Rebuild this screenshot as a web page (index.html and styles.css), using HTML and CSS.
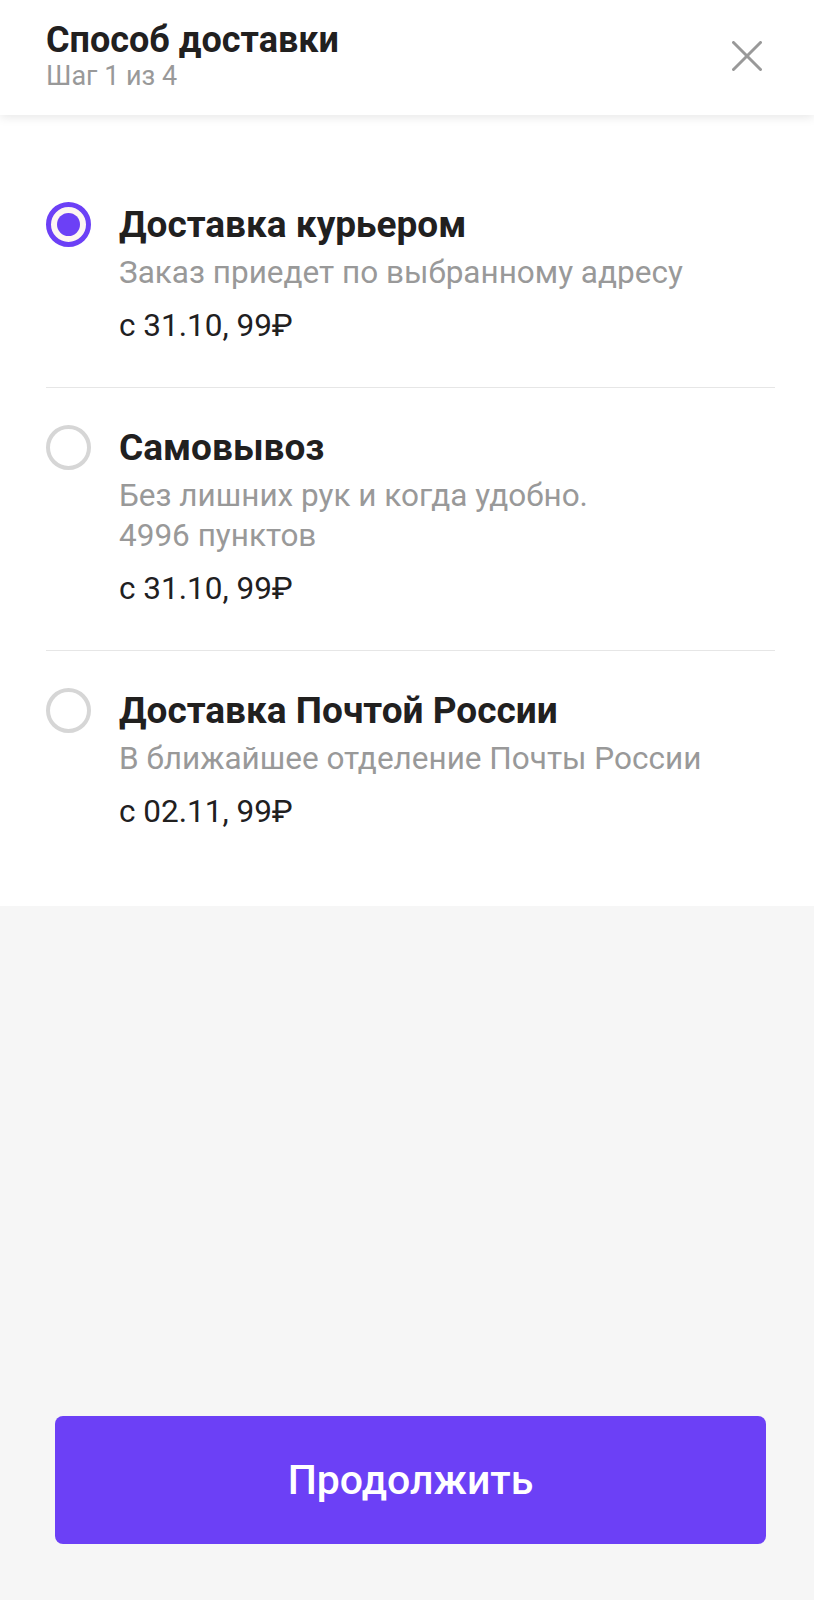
FILE: index.html
```html
<!DOCTYPE html>
<html>
<head>
  <meta charset="utf-8">
  <title>Способ доставки</title>
  <link rel="stylesheet" href="styles.css">
</head>
<body>
  <div class="page">
    <div class="header">
      <div class="header-text">
        <h1>Способ доставки</h1>
        <div class="step">Шаг 1 из 4</div>
      </div>
      <button class="close" aria-label="Закрыть">
        <svg width="30" height="30" viewBox="0 0 30 30">
          <line x1="1.5" y1="1.5" x2="28.5" y2="28.5" />
          <line x1="28.5" y1="1.5" x2="1.5" y2="28.5" />
        </svg>
      </button>
    </div>

    <div class="options">
      <div class="option">
        <span class="radio checked"></span>
        <div class="option-body">
          <div class="option-title">Доставка курьером</div>
          <div class="option-desc">Заказ приедет по выбранному адресу</div>
          <div class="option-price">с 31.10, 99₽</div>
        </div>
      </div>

      <div class="option">
        <span class="radio"></span>
        <div class="option-body">
          <div class="option-title">Самовывоз</div>
          <div class="option-desc">Без лишних рук и когда удобно.<br>4996 пунктов</div>
          <div class="option-price">с 31.10, 99₽</div>
        </div>
      </div>

      <div class="option">
        <span class="radio"></span>
        <div class="option-body">
          <div class="option-title">Доставка Почтой России</div>
          <div class="option-desc">В ближайшее отделение Почты России</div>
          <div class="option-price">с 02.11, 99₽</div>
        </div>
      </div>
    </div>

    <div class="footer">
      <button class="btn">Продолжить</button>
    </div>
  </div>
</body>
</html>
```

FILE: styles.css
```css
body {
  font-family: Roboto, "Noto Sans", Arial, sans-serif;
  background-color: #f6f6f6;
  color: #21201f;
  margin: 0;
  padding: 0;
}

.page {
  display: flex;
  flex-direction: column;
  min-height: 100vh;
}

.header {
  position: relative;
  z-index: 1;
  display: flex;
  justify-content: space-between;
  align-items: flex-start;
  height: 115px;
  box-sizing: border-box;
  padding: 20px 52px 0 46px;
  background-color: #fff;
  box-shadow: 0 2px 10px rgba(0, 0, 0, 0.1);
}

h1 {
  margin: 0;
  font-size: 36px;
  line-height: 40px;
  font-weight: 700;
}

.step {
  font-size: 27px;
  line-height: 32px;
  color: #999;
}

.close {
  margin-top: 21px;
  padding: 0;
  border: none;
  background: none;
  cursor: pointer;
}

.close svg {
  display: block;
  stroke: #999;
  stroke-width: 3;
  stroke-linecap: round;
}

.options {
  background-color: #fff;
  padding: 50px 39px 33px 46px;
}

.option {
  display: flex;
  align-items: flex-start;
  gap: 28px;
  padding: 37px 0 41px;
  border-bottom: 1px solid #e6e6e6;
}

.option:last-child {
  border-bottom: none;
}

.radio {
  flex: none;
  width: 45px;
  height: 45px;
  box-sizing: border-box;
  border: 4px solid #d6d6d6;
  border-radius: 50%;
  background-color: #fff;
}

.radio.checked {
  display: flex;
  align-items: center;
  justify-content: center;
  border: 5px solid #6c40f6;
  background-color: #fdf5f2;
}

.radio.checked::after {
  content: "";
  width: 23px;
  height: 23px;
  border-radius: 50%;
  background-color: #6c40f6;
}

.option-title {
  font-size: 37px;
  line-height: 46px;
  font-weight: 700;
}

.option-desc {
  margin-top: 5px;
  font-size: 31.5px;
  line-height: 40px;
  color: #999;
}

.option-price {
  margin-top: 13px;
  font-size: 31.5px;
  line-height: 40px;
}

.footer {
  flex: 1;
  display: flex;
  flex-direction: column;
  justify-content: flex-end;
  padding: 0 48px 56px 55px;
}

.btn {
  height: 128px;
  border: none;
  border-radius: 8px;
  background-color: #6c40f6;
  color: #fff;
  font-family: inherit;
  font-size: 41px;
  font-weight: 500;
  cursor: pointer;
}
```
